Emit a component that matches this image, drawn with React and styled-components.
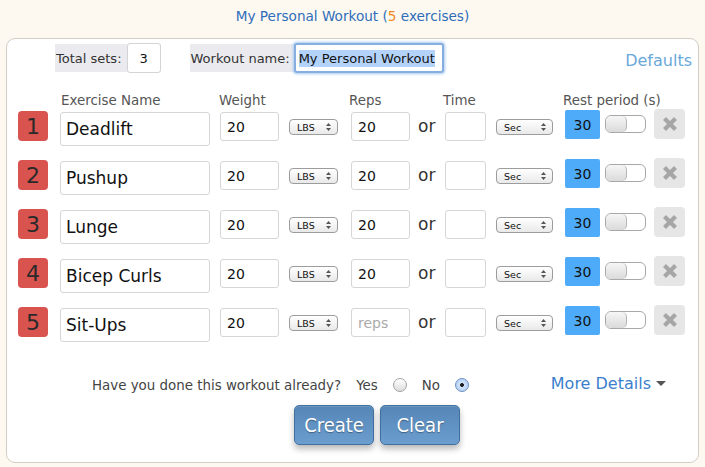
import React from "react";
import styled, { createGlobalStyle } from "styled-components";

const GlobalStyle = createGlobalStyle`
  html, body { margin: 0; padding: 0; }
  body {
    background: #fdf9f1;
    font-family: "DejaVu Sans", Verdana, sans-serif;
  }
`;

const Page = styled.div`
  width: 705px;
  height: 467px;
  overflow: hidden;
  box-sizing: border-box;
`;

const Title = styled.div`
  height: 38px;
  box-sizing: border-box;
  padding-top: 8px;
  line-height: 16px;
  text-align: center;
  font-size: 13.6px;
  color: #2e6db9;
`;

const Count = styled.span`
  color: #f08a1c;
`;

const Panel = styled.div`
  margin: 0 6px;
  height: 425px;
  box-sizing: border-box;
  border: 1px solid #d3cec4;
  border-radius: 9px;
  background: #fff;
`;

const TopBar = styled.div`
  display: flex;
  align-items: center;
  padding: 4px 6px 0 48px;
  height: 34px;
  box-sizing: border-box;
`;

const Group = styled.div`
  display: flex;
  align-items: center;
  background: #ebebef;
  height: 28px;
  padding-left: 1px;
  margin-left: ${(p) => p.$offset || 0}px;
`;

const GroupLabel = styled.span`
  font-size: 13px;
  color: #333;
  padding-right: ${(p) => p.$pad || 3}px;
`;

const SetsInput = styled.input`
  width: 34px;
  height: 30px;
  box-sizing: border-box;
  border: 1px solid #d4d4d4;
  border-radius: 3px;
  background: #fff;
  text-align: center;
  font-family: "DejaVu Sans", Verdana, sans-serif;
  font-size: 13px;
  color: #111;
  padding: 0;
  outline: none;
`;

const NameField = styled.div`
  width: 150px;
  height: 30px;
  box-sizing: border-box;
  border: 2px solid #86aee0;
  border-radius: 3px;
  box-shadow: 0 0 3px 1px #a9c8f0;
  background: #fff;
  display: flex;
  align-items: center;
  padding-left: 3px;
  font-size: 13px;
  color: #111;
  white-space: nowrap;
  overflow: hidden;
`;

const Selected = styled.span`
  background: #b4d3fb;
  line-height: 17px;
`;

const Defaults = styled.a`
  margin-left: auto;
  margin-top: 4px;
  font-size: 16px;
  color: #6aa9da;
  text-decoration: none;
`;

const Grid = styled.div`
  display: grid;
  grid-template-columns: 42px 160px 69px 62px 67px 27px 51px 69px 40px 49px 31px;
  padding-left: 11px;
`;

const HeaderRow = styled(Grid)`
  margin-top: 20px;
  height: 16px;
  line-height: 16px;
  font-size: 13.4px;
  color: #555;
`;

const HeadCell = styled.div`
  grid-column: ${(p) => p.$col};
  white-space: nowrap;
  margin-left: ${(p) => p.$shift || 0}px;
`;

const Rows = styled.div`
  display: flex;
  flex-direction: column;
  gap: 19px;
  margin-top: 1px;
`;

const Row = styled(Grid)`
  height: 30px;
  grid-template-rows: 30px;
  align-items: center;
`;

const Badge = styled.div`
  width: 30px;
  height: 30px;
  margin-top: 2px;
  border-radius: 4px;
  background: #d9534f;
  color: #2a2a2a;
  font-size: 22px;
  display: flex;
  align-items: center;
  justify-content: center;
`;

const baseInput = `
  box-sizing: border-box;
  border: 1px solid #d6d6d6;
  border-radius: 3px;
  background: #fff;
  font-family: "DejaVu Sans", Verdana, sans-serif;
  color: #111;
  outline: none;
  &::placeholder { color: #aaa; }
`;

const ExerciseInput = styled.input`
  ${baseInput}
  align-self: start;
  width: 150px;
  height: 34px;
  margin-top: 2px;
  padding: 0 0 0 5px;
  font-size: 17px;
  position: relative;
  z-index: 1;
`;

const NumInput = styled.input`
  ${baseInput}
  width: ${(p) => p.$w}px;
  height: 29px;
  margin-top: 3px;
  padding: 0 0 0 6px;
  font-size: 14px;
`;

const Select = styled.div`
  width: ${(p) => p.$w}px;
  height: 16px;
  margin-top: 4px;
  box-sizing: border-box;
  border: 1px solid #9c9c9c;
  border-radius: 4px;
  background: linear-gradient(#ffffff, #e9e9e9);
  display: flex;
  align-items: center;
  justify-content: space-between;
  padding: 0 6px 0 7px;
  font-size: 9.5px;
  color: #111;
`;

const Or = styled.div`
  font-size: 17px;
  color: #333;
  margin-top: 2px;
`;

const Rest = styled.div`
  width: 35px;
  height: 29px;
  margin-top: -1px;
  background: #4eabf9;
  border-radius: 2px;
  display: flex;
  align-items: center;
  justify-content: center;
  font-size: 14px;
  color: #111;
`;

const Toggle = styled.div`
  width: 41px;
  height: 18px;
  margin-top: -3px;
  box-sizing: border-box;
  border: 1px solid #a8a8a8;
  border-radius: 6px;
  background: #fff;
  overflow: hidden;
  display: flex;
`;

const Knob = styled.div`
  width: 20px;
  height: 100%;
  border-right: 1px solid #b5b5b5;
  border-radius: 5px;
  background: linear-gradient(#f6f6f6, #dadada);
`;

const Remove = styled.button`
  width: 31px;
  height: 30px;
  margin-top: -2px;
  border: none;
  border-radius: 4px;
  background: #e6e6e6;
  display: flex;
  align-items: center;
  justify-content: center;
  padding: 0;
`;

const BottomRow = styled.div`
  display: flex;
  align-items: center;
  height: 20px;
  margin-top: 39px;
  padding: 0 32px 0 85px;
  font-size: 13.4px;
  color: #444;
`;

const Question = styled.span`
  margin-right: 15px;
`;

const RadioLabel = styled.span`
  margin-right: 15px;
`;

const Radio = styled.span`
  width: 14px;
  height: 14px;
  box-sizing: border-box;
  border-radius: 50%;
  border: 1px solid ${(p) => (p.$checked ? "#6b8fc4" : "#a3a3a3")};
  background: ${(p) =>
    p.$checked
      ? "radial-gradient(circle, #222 0 1.6px, #cfe2fa 2.2px, #a9c8ef 100%)"
      : "linear-gradient(#ffffff, #dcdcdc)"};
  margin-right: ${(p) => p.$mr || 0}px;
  display: inline-block;
`;

const MoreDetails = styled.a`
  margin-left: auto;
  margin-top: -4px;
  font-size: 16px;
  color: #3b7fcc;
  text-decoration: none;
  display: flex;
  align-items: center;
  gap: 5px;
`;

const Caret = styled.span`
  width: 0;
  height: 0;
  border-left: 5px solid transparent;
  border-right: 5px solid transparent;
  border-top: 5px solid #555;
`;

const ButtonRow = styled.div`
  display: flex;
  gap: 6px;
  margin-top: 10px;
  padding-left: 287px;
`;

const ActionButton = styled.button`
  width: 80px;
  height: 40px;
  box-sizing: border-box;
  border: 1px solid #41709f;
  border-radius: 5px;
  background: linear-gradient(#5485b6, #6b9ecf);
  box-shadow: 0 4px 6px rgba(0, 0, 0, 0.28), inset 0 1px 0 rgba(255, 255, 255, 0.15);
  color: #fff;
  font-family: "DejaVu Sans Condensed", "DejaVu Sans", sans-serif;
  font-size: 20px;
  text-shadow: 0 1px 1px rgba(0, 0, 0, 0.35);
  padding: 0;
`;

const Arrows = () => (
  <svg width="5" height="8" viewBox="0 0 5 8">
    <path d="M2.5 0 L5 3 H0 Z M2.5 8 L5 5 H0 Z" fill="#555" />
  </svg>
);

const XIcon = () => (
  <svg width="16" height="16" viewBox="0 0 16 16">
    <path d="M2.5 2.5 L13.5 13.5 M13.5 2.5 L2.5 13.5" stroke="#a6a6a6" strokeWidth="4.2" />
  </svg>
);

const exercises = [
  { name: "Deadlift", reps: "20" },
  { name: "Pushup", reps: "20" },
  { name: "Lunge", reps: "20" },
  { name: "Bicep Curls", reps: "20" },
  { name: "Sit-Ups", reps: "" },
];

export default function App() {
  return (
    <Page>
      <GlobalStyle />
      <Title>
        My Personal Workout (<Count>5</Count> exercises)
      </Title>
      <Panel>
        <TopBar>
          <Group>
            <GroupLabel $pad={5}>Total sets:</GroupLabel>
            <SetsInput defaultValue="3" readOnly />
          </Group>
          <Group $offset={29}>
            <GroupLabel $pad={4}>Workout name:</GroupLabel>
            <NameField>
              <Selected>My Personal Workout</Selected>
            </NameField>
          </Group>
          <Defaults>Defaults</Defaults>
        </TopBar>
        <HeaderRow>
          <HeadCell $col={2} $shift={1}>Exercise Name</HeadCell>
          <HeadCell $col={3} $shift={-1}>Weight</HeadCell>
          <HeadCell $col={5} $shift={-2}>Reps</HeadCell>
          <HeadCell $col={7} $shift={-2}>Time</HeadCell>
          <HeadCell $col={9} $shift={-2}>Rest period (s)</HeadCell>
        </HeaderRow>
        <Rows>
          {exercises.map((ex, i) => (
            <Row key={ex.name}>
              <Badge>{i + 1}</Badge>
              <ExerciseInput defaultValue={ex.name} readOnly />
              <NumInput $w={59} defaultValue="20" readOnly />
              <Select $w={49}>
                <span>LBS</span>
                <Arrows />
              </Select>
              <NumInput $w={59} defaultValue={ex.reps} placeholder="reps" readOnly />
              <Or>or</Or>
              <NumInput $w={41} readOnly />
              <Select $w={57}>
                <span>Sec</span>
                <Arrows />
              </Select>
              <Rest>30</Rest>
              <Toggle>
                <Knob />
              </Toggle>
              <Remove aria-label="Remove">
                <XIcon />
              </Remove>
            </Row>
          ))}
        </Rows>
        <BottomRow>
          <Question>Have you done this workout already?</Question>
          <RadioLabel>Yes</RadioLabel>
          <Radio $mr={15} />
          <RadioLabel>No</RadioLabel>
          <Radio $checked />
          <MoreDetails>
            More Details <Caret />
          </MoreDetails>
        </BottomRow>
        <ButtonRow>
          <ActionButton>Create</ActionButton>
          <ActionButton>Clear</ActionButton>
        </ButtonRow>
      </Panel>
    </Page>
  );
}
